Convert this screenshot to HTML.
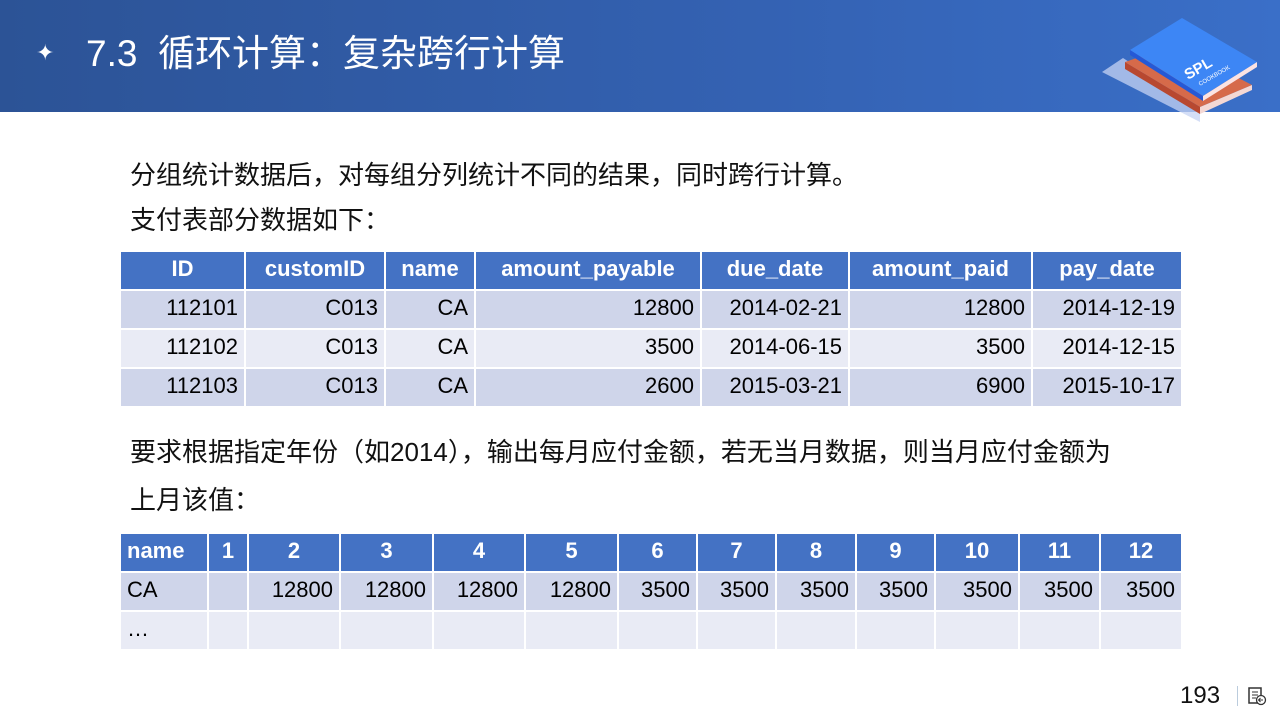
<!DOCTYPE html><html><head><meta charset="utf-8"><style>
body{margin:0;width:1280px;height:720px;position:relative;background:#fff;font-family:"Liberation Sans","Noto Sans CJK SC",sans-serif;overflow:hidden}
.hd{position:absolute;left:0;top:0;width:1280px;height:112px;background:linear-gradient(90deg,#2c5396,#3462b3 60%,#3a6fc8)}
.ttl{position:absolute;left:86px;top:30px;color:#fff;font-size:37px;line-height:48px}
.star{position:absolute;left:36px;top:40px;color:#fff;font-size:22px}
.p{position:absolute;left:130px;font-size:26px;color:#111;line-height:34px}
table{position:absolute;border-collapse:collapse;font-size:22px;table-layout:fixed}
td,th{border:2px solid #fff;padding:0 6px 3px;height:34px;text-align:right;white-space:nowrap}
th{background:#4472c4;color:#fff;text-align:center;font-weight:bold}
tr.a td{background:#cfd5ea}tr.b td{background:#e9ebf5}
</style></head><body>
<div class="hd"></div>
<div class="star">✦</div>
<div class="ttl">7.3&nbsp;&nbsp;循环计算：复杂跨行计算</div>
<svg style="position:absolute;left:0;top:0" width="1280" height="130" viewBox="0 0 1280 130">
<polygon points="1102,72 1123,58 1200,108 1200,122" fill="#c5d3f3" opacity="0.75"/>
<polygon points="1125,62 1175,45 1252,85 1200,107" fill="#d66a4a"/>
<polygon points="1125,62 1200,107 1200,114 1125,69" fill="#b84830"/>
<polygon points="1200,107 1252,85 1252,90 1200,114" fill="#f4d8d4"/>
<polygon points="1130,50 1182,18 1257,62 1203,96" fill="#3d86f5"/>
<polygon points="1130,50 1203,96 1203,101 1130,55" fill="#2559d6"/>
<polygon points="1203,96 1257,62 1257,67 1203,101" fill="#fbe3e3"/>
<text x="1188" y="80" fill="#fff" font-size="15" font-weight="bold" transform="rotate(-30 1188 80)" font-family="Liberation Sans">SPL</text>
<text x="1200" y="86" fill="#fff" font-size="6" transform="rotate(-30 1200 86)" font-family="Liberation Sans">COOKBOOK</text>
</svg>
<div class="p" style="top:158px">分组统计数据后，对每组分列统计不同的结果，同时跨行计算。</div>
<div class="p" style="top:203px">支付表部分数据如下：</div>
<table style="left:119px;top:250px;width:1062px">
<colgroup><col style="width:125px"><col style="width:140px"><col style="width:90px"><col style="width:226px"><col style="width:148px"><col style="width:183px"><col style="width:150px"></colgroup>
<tr><th>ID</th><th>customID</th><th>name</th><th>amount_payable</th><th>due_date</th><th>amount_paid</th><th>pay_date</th></tr>
<tr class="a"><td>112101</td><td>C013</td><td>CA</td><td>12800</td><td>2014-02-21</td><td>12800</td><td>2014-12-19</td></tr>
<tr class="b"><td>112102</td><td>C013</td><td>CA</td><td>3500</td><td>2014-06-15</td><td>3500</td><td>2014-12-15</td></tr>
<tr class="a"><td>112103</td><td>C013</td><td>CA</td><td>2600</td><td>2015-03-21</td><td>6900</td><td>2015-10-17</td></tr>
</table>
<div class="p" style="top:435px">要求根据指定年份（如2014），输出每月应付金额，若无当月数据，则当月应付金额为</div>
<div class="p" style="top:483px">上月该值：</div>
<table style="left:119px;top:532px;width:1062px">
<colgroup><col style="width:88px"><col style="width:40px"><col style="width:92px"><col style="width:93px"><col style="width:92px"><col style="width:93px"><col style="width:79px"><col style="width:79px"><col style="width:80px"><col style="width:79px"><col style="width:84px"><col style="width:81px"><col style="width:82px"></colgroup>
<tr><th style="text-align:left">name</th><th>1</th><th>2</th><th>3</th><th>4</th><th>5</th><th>6</th><th>7</th><th>8</th><th>9</th><th>10</th><th>11</th><th>12</th></tr>
<tr class="a"><td style="text-align:left">CA</td><td></td><td>12800</td><td>12800</td><td>12800</td><td>12800</td><td>3500</td><td>3500</td><td>3500</td><td>3500</td><td>3500</td><td>3500</td><td>3500</td></tr>
<tr class="b"><td style="text-align:left">…</td><td></td><td></td><td></td><td></td><td></td><td></td><td></td><td></td><td></td><td></td><td></td><td></td></tr>
</table>
<div style="position:absolute;left:1180px;top:682px;font-size:24px;color:#111">193</div>
<div style="position:absolute;left:1237px;top:686px;width:1px;height:20px;background:#bcd"></div>
<svg style="position:absolute;left:1247px;top:686px" width="20" height="20" viewBox="0 0 20 20"><rect x="2" y="2" width="12" height="15" fill="none" stroke="#333" stroke-width="1.5"/><path d="M5 6h6M5 9h6M5 12h4" stroke="#333"/><circle cx="14" cy="14" r="4.5" fill="#fff" stroke="#333" stroke-width="1.3"/><path d="M16 14h-4M13.5 12l-2 2 2 2" stroke="#333" fill="none"/></svg>
</body></html>
